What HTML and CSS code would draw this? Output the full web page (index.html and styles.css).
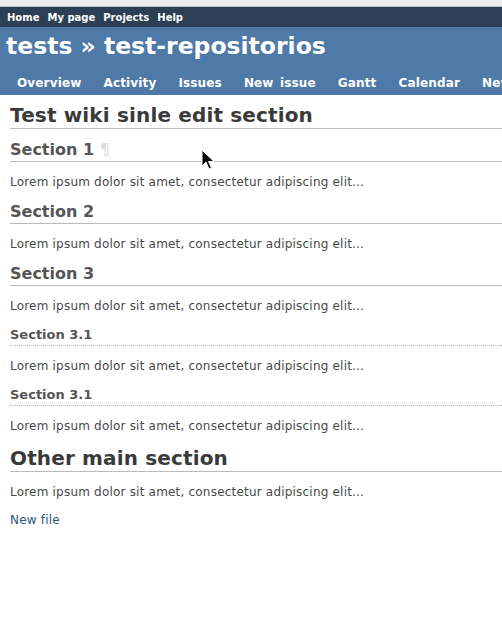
FILE: index.html
```html
<!DOCTYPE html>
<html lang="en">
<head>
    <meta charset="UTF-8">
    <meta name="viewport" content="width=device-width, initial-scale=1.0">
    <title>Wiki - tests</title>
    <link rel="stylesheet" href="styles.css">
</head>
<body>

<div class="window-strip"></div>

<div class="top-menu">
    <a href="#">Home</a>
    <a href="#">My page</a>
    <a href="#">Projects</a>
    <a href="#">Help</a>
</div>

<div class="header">
    <h1>tests &raquo; test-repositorios</h1>
    <ul class="main-menu">
        <li><a href="#">Overview</a></li>
        <li><a href="#">Activity</a></li>
        <li><a href="#">Issues</a></li>
        <li><a href="#">New issue</a></li>
        <li><a href="#">Gantt</a></li>
        <li><a href="#">Calendar</a></li>
        <li><a href="#">News</a></li>
        <li><a href="#">Documents</a></li>
        <li><a href="#">Wiki</a></li>
    </ul>
</div>

<div class="content">
    <h1 class="page-title">Test wiki sinle edit section</h1>

    <h2 class="section">Section 1 <a class="anchor" href="#">&para;</a></h2>
    <p>Lorem ipsum dolor sit amet, consectetur adipiscing elit...</p>

    <h2 class="section">Section 2</h2>
    <p>Lorem ipsum dolor sit amet, consectetur adipiscing elit...</p>

    <h2 class="section">Section 3</h2>
    <p>Lorem ipsum dolor sit amet, consectetur adipiscing elit...</p>

    <h4 class="sub">Section 3.1</h4>
    <p>Lorem ipsum dolor sit amet, consectetur adipiscing elit...</p>

    <h4 class="sub">Section 3.1</h4>
    <p>Lorem ipsum dolor sit amet, consectetur adipiscing elit...</p>

    <h1 class="page-title">Other main section</h1>
    <p>Lorem ipsum dolor sit amet, consectetur adipiscing elit...</p>

    <p><a class="link" href="#">New file</a></p>
</div>

<!-- mouse pointer seen in the screenshot -->
<svg class="cursor" width="14" height="22" viewBox="0 0 14 22">
    <path d="M1 1 L1 17 L5 13 L8 20 L10.5 19 L7.5 12.5 L13 12.5 Z" fill="#000" stroke="#fff" stroke-width="1"/>
</svg>

</body>
</html>
```

FILE: styles.css
```css
* {
    margin: 0;
    padding: 0;
    box-sizing: border-box;
}

html {
    overflow: hidden;
}

body {
    font-family: "DejaVu Sans", Verdana, sans-serif;
    font-size: 12px;
    letter-spacing: 0.2px;
    color: #484848;
    background: #fff;
    min-width: 620px;
    position: relative;
}

.window-strip {
    height: 7px;
    background: #ededec;
    border-bottom: 1px solid #c4c4c4;
}

.top-menu {
    height: 20px;
    background: #2c3f55;
    padding-left: 7px;
    display: flex;
    align-items: center;
    gap: 8px;
}

.top-menu a {
    color: #fff;
    font-size: 10px;
    letter-spacing: 0;
    font-weight: bold;
    text-decoration: none;
}

.header {
    height: 68px;
    background: #4f7aa8;
    padding: 4px 6px 0;
    color: #fff;
}

.header h1 {
    font-size: 23.5px;
    line-height: 30px;
    letter-spacing: 0;
    font-weight: bold;
}

.main-menu {
    list-style: none;
    display: flex;
    white-space: nowrap;
    margin-top: 14px;
    padding-left: 1px;
}

.main-menu li a {
    display: block;
    padding: 0 10px;
    margin-right: 2px;
    line-height: 16px;
    color: #fff;
    font-size: 12px;
    letter-spacing: 0.15px;
    word-spacing: 2px;
    font-weight: bold;
    text-decoration: none;
}

.content {
    padding: 8px 0 0 10px;
}

.page-title {
    font-size: 20px;
    line-height: 24px;
    letter-spacing: 0.15px;
    color: #3a3a3a;
    padding-bottom: 1px;
    border-bottom: 1px solid #bbb;
    margin-top: 12px;
}

.page-title:first-child {
    margin-top: 0;
}

.section {
    font-size: 16px;
    line-height: 20px;
    letter-spacing: 0;
    color: #555;
    padding-bottom: 1px;
    border-bottom: 1px solid #bbb;
    margin-top: 12px;
}

.page-title + .section {
    margin-top: 11px;
}

.anchor {
    color: #ddd;
    font-weight: normal;
    text-decoration: none;
}

.sub {
    font-size: 13px;
    line-height: 18px;
    letter-spacing: 0;
    color: #555;
    padding-bottom: 1px;
    border-bottom: 1px dotted #bbb;
    margin-top: 12px;
}

p {
    line-height: 16px;
    margin: 12px 0;
}

.link {
    color: #2a5685;
    text-decoration: none;
}

.cursor {
    position: absolute;
    left: 201px;
    top: 149px;
}
```
